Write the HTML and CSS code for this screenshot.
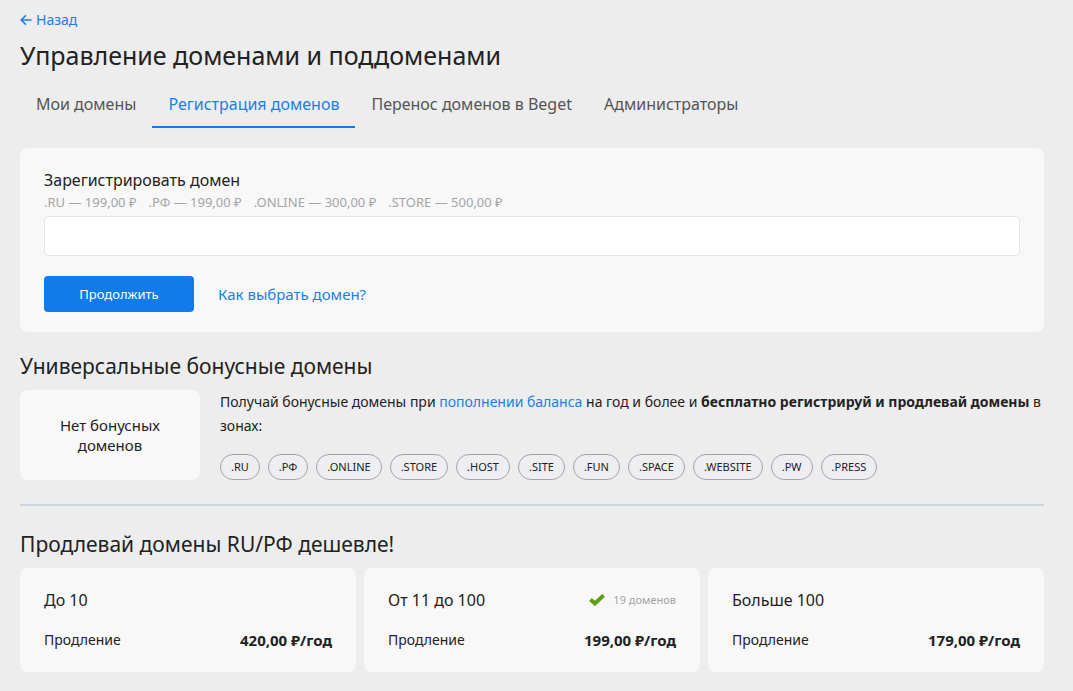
FILE: index.html
```html
<!DOCTYPE html>
<html lang="ru">

<head>
    <meta charset="UTF-8">
    <meta name="viewport" content="width=device-width, initial-scale=1.0">
    <title>Управление доменами и поддоменами</title>
    <link rel="stylesheet" href="styles.css">
</head>

<body>
    <header>
        <a class="back" href="#">
            <svg class="back-icon" width="12" height="12" viewBox="0 0 12 12" fill="none" stroke="currentColor" stroke-width="1.6">
                <path d="M11.5 6H1.5M6 1.2L1.2 6L6 10.8" />
            </svg>
            <span>Назад</span>
        </a>
        <h1>Управление доменами и поддоменами</h1>
        <nav class="tabs">
            <a class="tab" href="#">Мои домены</a>
            <a class="tab active" href="#">Регистрация доменов</a>
            <a class="tab" href="#">Перенос доменов в Beget</a>
            <a class="tab" href="#">Администраторы</a>
        </nav>
    </header>

    <main>
        <form class="card register">
            <label class="card-title" for="domain">Зарегистрировать домен</label>
            <div class="prices">
                <span>.RU — 199,00 ₽</span>
                <span>.РФ — 199,00 ₽</span>
                <span>.ONLINE — 300,00 ₽</span>
                <span>.STORE — 500,00 ₽</span>
            </div>
            <input type="text" id="domain" name="domain">
            <div class="actions">
                <button type="submit">Продолжить</button>
                <a class="help" href="#">Как выбрать домен?</a>
            </div>
        </form>

        <section>
            <h2>Универсальные бонусные домены</h2>
            <div class="bonus">
                <div class="card bonus-empty">Нет бонусных доменов</div>
                <div class="bonus-info">
                    <p>Получай бонусные домены при <a href="#">пополнении баланса</a> на год и более и <b>бесплатно регистрируй и продлевай домены</b> в зонах:</p>
                    <ul class="zones">
                        <li>.RU</li>
                        <li>.РФ</li>
                        <li>.ONLINE</li>
                        <li>.STORE</li>
                        <li>.HOST</li>
                        <li>.SITE</li>
                        <li>.FUN</li>
                        <li>.SPACE</li>
                        <li>.WEBSITE</li>
                        <li>.PW</li>
                        <li>.PRESS</li>
                    </ul>
                </div>
            </div>
        </section>

        <hr>

        <section>
            <h2>Продлевай домены RU/РФ дешевле!</h2>
            <div class="plans">
                <div class="card plan">
                    <div class="row">
                        <h3 class="card-title">До 10</h3>
                    </div>
                    <div class="row">
                        <span>Продление</span>
                        <b class="price">420,00 ₽/год</b>
                    </div>
                </div>
                <div class="card plan">
                    <div class="row">
                        <h3 class="card-title">От 11 до 100</h3>
                        <span class="count">
                            <svg width="16" height="12" viewBox="0 0 16 12" fill="none" stroke="#5fa012" stroke-width="4">
                                <path d="M1.4 5.4L6 9.4L14.6 1.4" />
                            </svg>
                            19 доменов
                        </span>
                    </div>
                    <div class="row">
                        <span>Продление</span>
                        <b class="price">199,00 ₽/год</b>
                    </div>
                </div>
                <div class="card plan">
                    <div class="row">
                        <h3 class="card-title">Больше 100</h3>
                    </div>
                    <div class="row">
                        <span>Продление</span>
                        <b class="price">179,00 ₽/год</b>
                    </div>
                </div>
            </div>
        </section>
    </main>
</body>

</html>
```
FILE: styles.css
```css
* {
    box-sizing: border-box;
}

body {
    margin: 0;
    padding: 10px 29px 19px 20px;
    background-color: #ededed;
    color: #222;
    font-family: "Noto Sans", sans-serif;
    font-size: 14px;
    line-height: 20px;
}

a {
    color: #1a7fe8;
    text-decoration: none;
}

h1,
h2,
h3,
p,
ul {
    margin: 0;
    padding: 0;
    font-weight: normal;
}

.back {
    display: inline-flex;
    align-items: center;
    gap: 4px;
}

h1 {
    margin-top: 8px;
    font-size: 25px;
    line-height: 32px;
}

h2 {
    font-size: 21px;
    line-height: 28px;
}

.tabs {
    display: flex;
    margin-top: 9px;
}

.tab {
    padding: 12px 16px 10px;
    border-bottom: 2px solid transparent;
    color: #555;
    font-size: 16px;
    line-height: 24px;
}

.tab.active {
    border-bottom-color: #127bea;
    color: #1a7fe8;
}

.card {
    border-radius: 8px;
    background-color: #f8f8f8;
}

.card-title {
    font-size: 16px;
    line-height: 20px;
}

.register {
    display: flex;
    flex-direction: column;
    margin: 20px 0;
    padding: 22px 24px 20px;
}

.prices {
    display: flex;
    gap: 12px;
    margin: 2px 0 4px;
    color: #a5a5a8;
    font-size: 13px;
}

input[type="text"] {
    width: 100%;
    height: 40px;
    padding: 0 12px;
    border: 1px solid #e4e4e6;
    border-radius: 5px;
    background-color: white;
    font: inherit;
}

.actions {
    display: flex;
    align-items: center;
    gap: 24px;
    margin-top: 20px;
}

button {
    width: 150px;
    height: 36px;
    border: none;
    border-radius: 4px;
    background-color: #127bea;
    color: white;
    font-family: inherit;
    font-size: 13px;
    cursor: pointer;
}

.bonus {
    display: flex;
    align-items: flex-start;
    gap: 20px;
    margin-top: 10px;
}

.bonus-empty {
    display: flex;
    flex: 0 0 180px;
    align-items: center;
    height: 90px;
    padding: 0 30px;
    text-align: center;
}

.help,
.bonus-empty,
.price {
    font-size: 15px;
}

.bonus-info p {
    line-height: 24px;
}

.zones {
    display: flex;
    flex-wrap: wrap;
    gap: 8px;
    margin-top: 16px;
    list-style: none;
}

.zones li {
    padding: 0 10px;
    border: 1px solid #a3a3ad;
    border-radius: 13px;
    background-color: #eeeef0;
    font-size: 11px;
    line-height: 24px;
}

hr {
    height: 2px;
    margin: 24px 0;
    border: none;
    background-color: #cdd5de;
}

.plans {
    display: grid;
    grid-template-columns: repeat(3, 1fr);
    gap: 8px;
    margin-top: 10px;
}

.plan {
    display: flex;
    flex-direction: column;
    gap: 20px;
    padding: 22px 24px;
}

.row {
    display: flex;
    align-items: center;
    justify-content: space-between;
}

.count {
    display: flex;
    align-items: center;
    gap: 8px;
    color: #a5a5a8;
    font-size: 11px;
}
```
